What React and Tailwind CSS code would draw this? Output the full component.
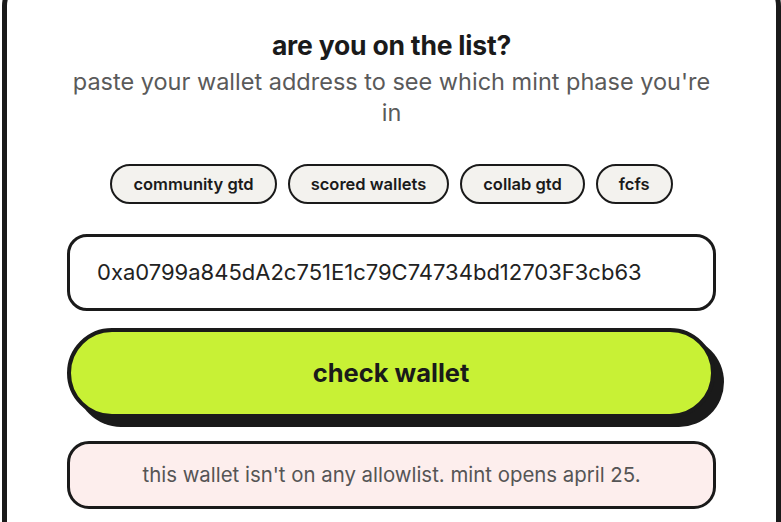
export default function App() {
  const phases = ["community gtd", "scored wallets", "collab gtd", "fcfs"];
  return (
    <div className="w-[781px] h-[522px] overflow-hidden bg-white" style={{ fontFamily: "Inter, 'Liberation Sans', sans-serif" }}>
      <div className="-mt-[24px] ml-[2px] w-[779px] h-[600px] rounded-[30px] border-[5px] border-[#1a1a1a] bg-white px-[60px] pt-[48px]">
        <h2 className="text-center text-[26.5px] leading-[32px] font-bold text-[#1a1a1a] tracking-[-0.2px]">are you on the list?</h2>
        <p className="mt-[5px] text-center text-[23.5px] leading-[31px] text-[#5a5a5a]">paste your wallet address to see which mint phase you're in</p>
        <div className="mt-[36px] flex justify-center gap-[11px]">
          {phases.map((p) => (
            <div key={p} className="h-[40px] px-[21px] flex items-center rounded-full border-[2.5px] border-[#1a1a1a] bg-[#f3f2ee] text-[16.5px] font-semibold text-[#1a1a1a]">
              {p}
            </div>
          ))}
        </div>
        <div className="mt-[30px] h-[77px] rounded-[20px] border-[3px] border-[#1a1a1a] flex items-center px-[27px] text-[22px] text-[#222]">
          0xa0799a845dA2c751E1c79C74734bd12703F3cb63
        </div>
        <div className="mt-[17px] w-[648px] h-[90px] rounded-full border-[4px] border-[#1a1a1a] bg-[#c8f135] shadow-[9px_9px_0_#1a1a1a] flex items-center justify-center text-[25.5px] font-bold text-[#1a1a1a]">
          check wallet
        </div>
        <div className="mt-[23px] h-[68px] rounded-[22px] border-[3px] border-[#1a1a1a] bg-[#fdeeed] flex items-center justify-center text-[20.4px] text-[#555]">
          this wallet isn't on any allowlist. mint opens april 25.
        </div>
      </div>
    </div>
  );
}
